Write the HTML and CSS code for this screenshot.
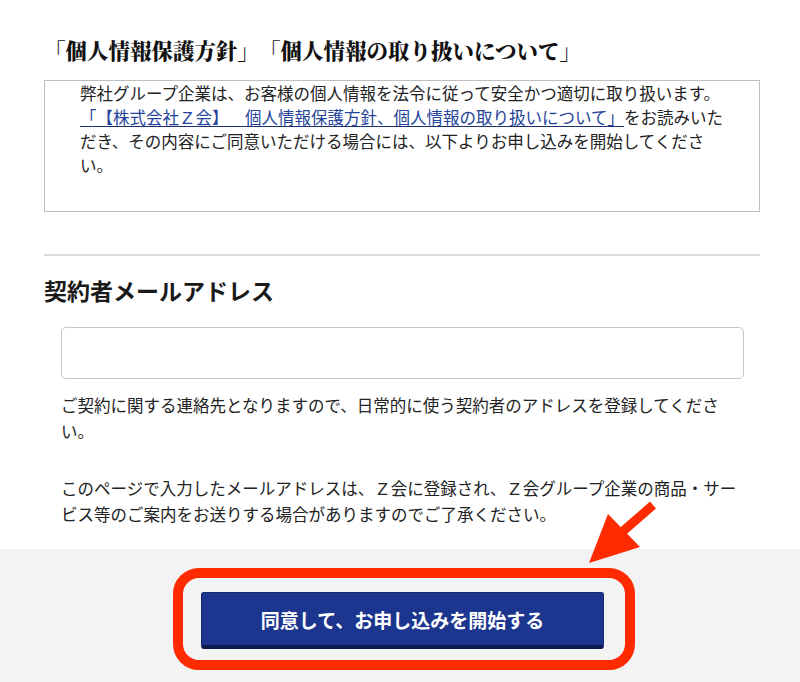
FILE: index.html
```html
<!DOCTYPE html>
<html lang="ja">
<head>
<meta charset="utf-8">
<title>お申し込み</title>
<link rel="stylesheet" href="styles.css">
</head>
<body>
<main class="page">
  <h1 class="policy-title">「個人情報保護方針」「個人情報の取り扱いについて」</h1>
  <div class="policy-box">
    <p class="policy-text">弊社グループ企業は、お客様の個人情報を法令に従って安全かつ適切に取り扱います。<br><a class="policy-link" href="#">「【株式会社Ｚ会】　個人情報保護方針、個人情報の取り扱いについて」</a>をお読みいただき、その内容にご同意いただける場合には、以下よりお申し込みを開始してください。</p>
  </div>
  <div class="divider"></div>
  <h2 class="field-title">契約者メールアドレス</h2>
  <div class="field">
    <input class="email-input" type="email" aria-label="契約者メールアドレス">
    <p class="note note-first">ご契約に関する連絡先となりますので、日常的に使う契約者のアドレスを登録してください。</p>
    <p class="note note-second">このページで入力したメールアドレスは、Ｚ会に登録され、Ｚ会グループ企業の商品・サービス等のご案内をお送りする場合がありますのでご了承ください。</p>
  </div>
</main>
<footer class="action-band">
  <div class="button-wrap">
    <button class="start-button" type="button">同意して、お申し込みを開始する</button>
    <span class="highlight-ring"></span>
  </div>
</footer>
<svg class="pointer-arrow" viewBox="584 498 74 70" aria-hidden="true">
  <line x1="622" y1="532" x2="653" y2="505" stroke="#ff2a00" stroke-width="9"/>
  <polygon points="589,563 608,514 640,547" fill="#ff2a00"/>
</svg>
</body>
</html>
```

FILE: styles.css
```css
* {
  box-sizing: border-box;
}

html, body {
  margin: 0;
  padding: 0;
  background: #ffffff;
}

body {
  position: relative;
  width: 800px;
  height: 682px;
  overflow: hidden;
  font-family: "Noto Sans CJK JP", "Noto Sans", sans-serif;
  color: #222222;
  text-spacing-trim: space-all;
  line-break: strict;
}

.page {
  padding: 35px 40px 0 44px;
}

.policy-title {
  margin: 0;
  font-family: "Noto Serif CJK JP", "Noto Sans CJK JP", serif;
  font-size: 21.5px;
  line-height: 30px;
  font-weight: 900;
  color: #111111;
  text-spacing-trim: space-all;
}

.policy-box {
  margin-top: 15px;
  height: 132px;
  border: 1px solid #bfbfbf;
  padding: 0 24px 0 35px;
}

.policy-text {
  margin: 0;
  font-size: 16.5px;
  line-height: 24px;
  color: #222222;
  text-spacing-trim: space-all;
}

.policy-link {
  color: #24449a;
  text-decoration: underline;
  text-decoration-color: #1d2f6e;
  text-underline-offset: 2px;
}

.divider {
  margin-top: 42px;
  height: 2px;
  background: #d9d9d9;
}

.field-title {
  margin: 18px 0 0 0;
  font-size: 23px;
  line-height: 32px;
  font-weight: 700;
  color: #1a1a1a;
}

.field {
  margin-top: 21px;
  padding-left: 17px;
  width: 700px;
}

.email-input {
  display: block;
  width: 683px;
  height: 52px;
  margin: 0;
  border: 1px solid #c6c6c6;
  border-radius: 5px;
  background: #ffffff;
  font-size: 16px;
}

.note {
  margin: 0;
  width: 683px;
  font-size: 16.5px;
  line-height: 26px;
  color: #222222;
}

.note-first {
  margin-top: 13px;
}

.note-second {
  margin-top: 31px;
}

.action-band {
  margin-top: 22px;
  background: #f3f3f3;
  height: 140px;
  padding: 43px 0 0 5px;
  display: flex;
  justify-content: center;
  align-items: flex-start;
}

.button-wrap {
  position: relative;
}

.start-button {
  display: block;
  width: 403px;
  height: 57px;
  margin: 0;
  border: 1px solid #14296f;
  border-bottom: 4px solid #0c1a4e;
  border-radius: 3px;
  background: #1c3690;
  color: #ffffff;
  font-family: "Noto Sans CJK JP", "Noto Sans", sans-serif;
  font-size: 19px;
  font-weight: 700;
  line-height: 26px;
  padding: 2px 0 0 0;
}

.highlight-ring {
  position: absolute;
  top: -24px;
  right: -31px;
  bottom: -21px;
  left: -28px;
  border: 10px solid #ff2a00;
  border-radius: 26px;
  pointer-events: none;
}

.pointer-arrow {
  position: absolute;
  left: 584px;
  top: 498px;
  width: 74px;
  height: 70px;
  overflow: visible;
}
```
